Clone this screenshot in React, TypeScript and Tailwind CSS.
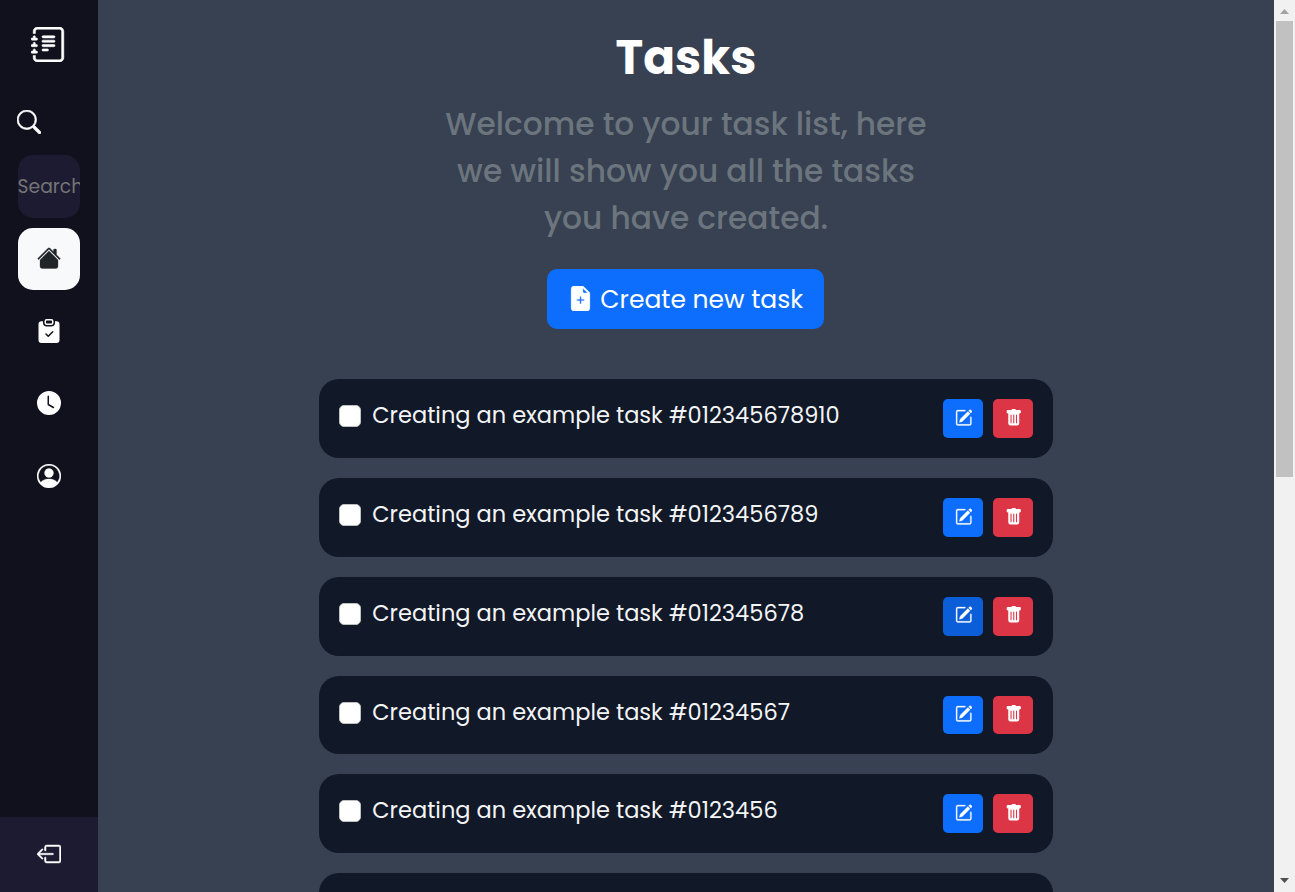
import React from "react";
import {
  BsJournalText, BsSearch, BsHouseFill, BsClipboardCheckFill, BsClockFill, BsPersonCircle,
  BsBoxArrowLeft, BsFileEarmarkPlusFill, BsPencilSquare, BsTrashFill,
} from "react-icons/bs";

const tasks = [
  "Creating an example task #012345678910",
  "Creating an example task #0123456789",
  "Creating an example task #012345678",
  "Creating an example task #01234567",
  "Creating an example task #0123456",
  "Creating an example task #012345",
];

function Sidebar() {
  return (
    <aside className="flex h-full w-[98px] shrink-0 flex-col bg-[#11101d] text-white">
      <div className="flex h-[89px] items-center justify-center pr-px">
        <BsJournalText className="size-[35px]" stroke="currentColor" strokeWidth={0.25} />
      </div>
      <div className="flex h-[66px] items-center pl-[17px]">
        <BsSearch className="size-6" stroke="currentColor" strokeWidth={0.4} />
      </div>
      <div className="mx-[18px] flex h-[63px] items-center overflow-hidden rounded-[15px] bg-[#1d1b31]">
        <span className="-ml-[0.5px] mt-[2px] whitespace-nowrap text-[18.75px] text-[#757575]">Search...</span>
      </div>
      <nav className="mt-[10px] flex flex-col gap-[10.4px] px-[18px]">
        <a className="flex h-[62px] items-center justify-center rounded-[15px] bg-[#f8f9fa] pb-[2px] text-[#212529]"><BsHouseFill className="size-6" stroke="currentColor" strokeWidth={0.2} /></a>
        <a className="flex h-[62px] items-center justify-center pb-px"><BsClipboardCheckFill className="size-6" /></a>
        <a className="flex h-[62px] items-center justify-center pb-[2px]"><BsClockFill className="size-6" /></a>
        <a className="flex h-[62px] items-center justify-center pb-px"><BsPersonCircle className="size-6" stroke="currentColor" strokeWidth={0.2} /></a>
      </nav>
      <div className="mt-auto flex h-[75px] items-center justify-center bg-[#1d1b31] pb-[2px]">
        <BsBoxArrowLeft className="size-6" stroke="currentColor" strokeWidth={0.3} />
      </div>
    </aside>
  );
}

function TaskRow({ title, active }: { title: string; active: boolean }) {
  return (
    <li className="flex h-[78.75px] shrink-0 items-start rounded-[20px] bg-[#111827] px-5 pt-5">
      <span className="mt-[6px] size-[22px] shrink-0 rounded-[5px] border border-[#bfbfbf] bg-white" />
      <span className="ml-[11.25px] whitespace-nowrap text-[22.5px] leading-[33px] text-[#f3f4f6]">{title}</span>
      <div className="ml-auto flex gap-[10px] text-white">
        <button className={`flex h-[38.75px] w-10 items-center justify-center rounded-[5px] pb-[2px] pl-[0.5px] ${active ? "bg-[#0b5ed7]" : "bg-[#0d6efd]"}`}>
          <BsPencilSquare className="size-[17.5px]" stroke="currentColor" strokeWidth={0.3} />
        </button>
        <button className="flex h-[38.75px] w-10 items-center justify-center rounded-[5px] bg-[#dc3545] pb-[2px] pl-[0.5px]">
          <BsTrashFill className="size-[17.5px]" />
        </button>
      </div>
    </li>
  );
}

function Scrollbar() {
  return (
    <div className="flex h-full w-[21px] shrink-0 flex-col items-center bg-[#f1f1f1]">
      <div className="flex h-[21px] shrink-0 items-center justify-center">
        <svg width="9" height="5" viewBox="0 0 9 5" className="mt-[2px]" fill="#a3a3a3"><path d="M4.5 0L9 5H0Z" /></svg>
      </div>
      <div className="h-[456px] w-[17px] bg-[#c1c1c1]" />
      <div className="mt-auto flex h-[21px] items-center justify-center">
        <svg width="9" height="5" viewBox="0 0 9 5" className="mb-[2px]" fill="#505050"><path d="M4.5 5L9 0H0Z" /></svg>
      </div>
    </div>
  );
}

export default function App() {
  return (
    <div className="flex h-[892px] w-[1295px] overflow-hidden bg-[#374151] font-['Poppins','Inter',sans-serif]">
      <Sidebar />
      <main className="flex min-w-0 flex-1 flex-col items-center overflow-hidden">
        <h1 className="mt-[28px] h-[60px] text-[46.875px] leading-[60px] font-bold text-white">Tasks</h1>
        <p className="mt-[13px] flex flex-col items-center whitespace-nowrap text-[31.25px] leading-[47px] font-medium text-[#6c757d]">
          <span>Welcome to your task list, here</span>
          <span>we will show you all the tasks</span>
          <span>you have created.</span>
        </p>
        <button className="mt-[27px] mr-[2px] flex h-[60px] w-[277px] shrink-0 items-center rounded-[10px] bg-[#0d6efd] pl-[21.5px] text-white">
          <BsFileEarmarkPlusFill className="mb-[2px] size-[25px]" stroke="currentColor" strokeWidth={0.2} />
          <span className="mt-[2px] ml-[7.25px] whitespace-nowrap text-[25px]">Create new task</span>
        </button>
        <ul className="mt-[50.25px] flex w-[734px] flex-col gap-5">
          {tasks.map((title, i) => <TaskRow key={title} title={title} active={i === 2} />)}
        </ul>
      </main>
      <Scrollbar />
    </div>
  );
}
